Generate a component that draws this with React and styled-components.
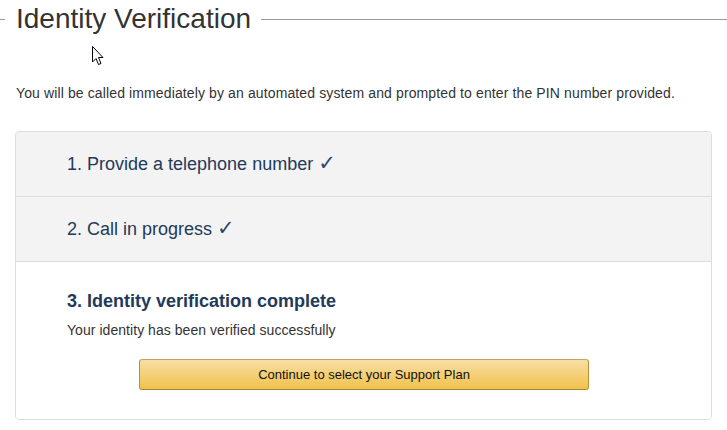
import React from "react";
import styled, { createGlobalStyle } from "styled-components";

const Global = createGlobalStyle`
  html, body { margin: 0; padding: 0; background: #fff; }
  body { font-family: "Liberation Sans", Arial, sans-serif; color: #333; }
`;

const Page = styled.div`
  position: relative;
  width: 727px;
  height: 430px;
  overflow: hidden;
`;

const Header = styled.div`
  display: flex;
  align-items: center;
  height: 38px;
`;

const Rule = styled.div`
  height: 1px;
  background: #999;
  width: ${(p) => (p.$w ? `${p.$w}px` : "auto")};
  flex: ${(p) => (p.$w ? "none" : "1")};
`;

const Title = styled.h1`
  margin: 0 10px 0 11px;
  font-size: 28px;
  font-weight: normal;
  line-height: 38px;
  color: #333;
  white-space: nowrap;
`;

const Intro = styled.p`
  margin: 47px 0 0 16px;
  font-size: 14px;
  letter-spacing: 0.12px;
  line-height: 16px;
  color: #333;
`;

const Panel = styled.div`
  margin: 30px 15px 0 15px;
  width: 695px;
  border: 1px solid #ddd;
  border-radius: 4px;
  overflow: hidden;
`;

const Step = styled.div`
  display: flex;
  align-items: center;
  height: ${(p) => p.$h}px;
  padding-left: 51px;
  background: ${(p) => (p.$done ? "#f3f3f3" : "#fff")};
  border-top: ${(p) => (p.$first ? "none" : "1px solid #ddd")};
  box-sizing: border-box;
`;

const StepTitle = styled.div`
  font-size: 18px;
  line-height: 22px;
  color: #1f3a5a;
  font-weight: ${(p) => (p.$bold ? "bold" : "normal")};
`;

const Check = styled.span`
  font-family: "DejaVu Sans", sans-serif;
  font-size: 21px;
  line-height: 1;
  color: #2a4a70;
  -webkit-text-stroke: 0;
`;

const ActiveStep = styled.div`
  height: 158px;
  padding: 28px 0 0 51px;
  box-sizing: border-box;
  border-top: 1px solid #ddd;
  background: #fff;
`;

const Note = styled.div`
  margin-top: 10px;
  font-size: 14px;
  letter-spacing: 0.05px;
  line-height: 16px;
  color: #333;
`;

const Button = styled.button`
  display: block;
  margin: 21px 0 0 72px;
  width: 450px;
  height: 31px;
  border: 1px solid;
  border-color: #c6a36a #b8903a #a88734;
  border-radius: 3px;
  background: linear-gradient(to bottom, #f7dfa5, #f0c14b);
  font-family: "Liberation Sans", Arial, sans-serif;
  font-size: 13px;
  color: #111;
  padding: 0;
  cursor: pointer;
`;

const Cursor = styled.svg`
  position: absolute;
  left: 91px;
  top: 45px;
`;

export default function App() {
  return (
    <Page>
      <Global />
      <Header>
        <Rule $w={5} />
        <Title>Identity Verification</Title>
        <Rule />
      </Header>
      <Intro>
        You will be called immediately by an automated system and prompted to enter the PIN number provided.
      </Intro>
      <Panel>
        <Step $h={64} $done $first>
          <StepTitle>
            1. Provide a telephone number <Check>✓</Check>
          </StepTitle>
        </Step>
        <Step $h={65} $done>
          <StepTitle>
            2. Call in progress <Check>✓</Check>
          </StepTitle>
        </Step>
        <ActiveStep>
          <StepTitle $bold>3. Identity verification complete</StepTitle>
          <Note>Your identity has been verified successfully</Note>
          <Button>Continue to select your Support Plan</Button>
        </ActiveStep>
      </Panel>
      <Cursor width="14" height="22" viewBox="0 0 14 22">
        <path
          d="M1.5 1.5 L1.5 17 L5 13.5 L7.5 19.5 L10 18.5 L7.5 12.5 L12 12.5 Z"
          fill="#fff"
          stroke="#000"
          strokeWidth="1"
          strokeLinejoin="miter"
        />
      </Cursor>
    </Page>
  );
}
